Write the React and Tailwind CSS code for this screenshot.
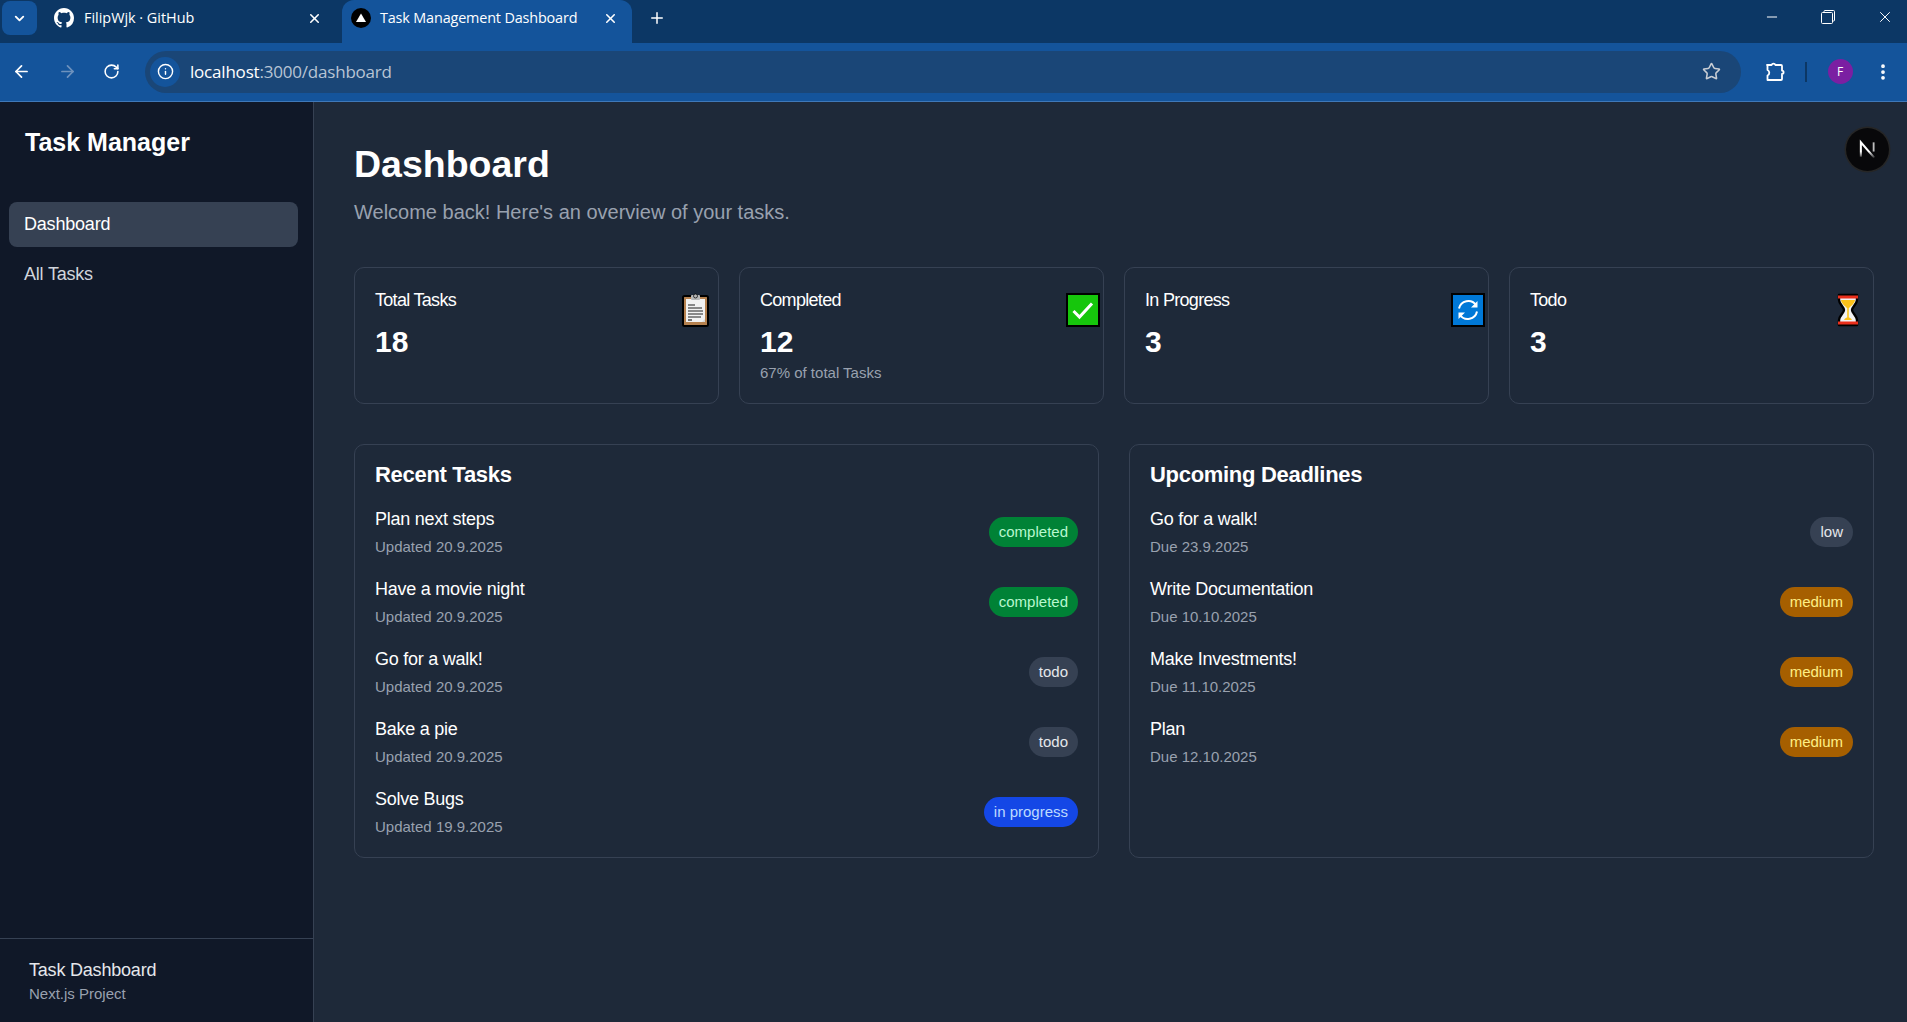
import { ArrowLeft, ArrowRight, RotateCw, Info, Star, EllipsisVertical, X, Plus, ChevronDown, Minus } from "lucide-react";

const stats = [
  { title: "Total Tasks", value: "18", icon: "clipboard" },
  { title: "Completed", value: "12", note: "67% of total Tasks", icon: "check" },
  { title: "In Progress", value: "3", icon: "refresh" },
  { title: "Todo", value: "3", icon: "hourglass" },
];

const recent = [
  { name: "Plan next steps", sub: "Updated 20.9.2025", badge: "completed" },
  { name: "Have a movie night", sub: "Updated 20.9.2025", badge: "completed" },
  { name: "Go for a walk!", sub: "Updated 20.9.2025", badge: "todo" },
  { name: "Bake a pie", sub: "Updated 20.9.2025", badge: "todo" },
  { name: "Solve Bugs", sub: "Updated 19.9.2025", badge: "in progress" },
];

const deadlines = [
  { name: "Go for a walk!", sub: "Due 23.9.2025", badge: "low" },
  { name: "Write Documentation", sub: "Due 10.10.2025", badge: "medium" },
  { name: "Make Investments!", sub: "Due 11.10.2025", badge: "medium" },
  { name: "Plan", sub: "Due 12.10.2025", badge: "medium" },
];

const badgeStyles = {
  completed: "bg-green-700 text-green-200",
  todo: "bg-gray-700 text-gray-200",
  low: "bg-gray-700 text-gray-200",
  "in progress": "bg-blue-700 text-blue-200",
  medium: "bg-yellow-700 text-yellow-200",
};

function GithubMark() {
  return (
    <svg viewBox="0 0 16 16" className="w-5 h-5 shrink-0" fill="white">
      <path d="M8 0C3.58 0 0 3.58 0 8c0 3.54 2.29 6.53 5.47 7.59.4.07.55-.17.55-.38 0-.19-.01-.82-.01-1.49-2.01.37-2.53-.49-2.69-.94-.09-.23-.48-.94-.82-1.13-.28-.15-.68-.52-.01-.53.63-.01 1.08.58 1.23.82.72 1.21 1.87.87 2.33.66.07-.52.28-.87.51-1.07-1.78-.2-3.64-.89-3.64-3.95 0-.87.31-1.59.82-2.15-.08-.2-.36-1.02.08-2.12 0 0 .67-.21 2.2.82.64-.18 1.32-.27 2-.27s1.36.09 2 .27c1.53-1.04 2.2-.82 2.2-.82.44 1.1.16 1.92.08 2.12.51.56.82 1.27.82 2.15 0 3.07-1.87 3.75-3.65 3.95.29.25.54.73.54 1.48 0 1.07-.01 1.93-.01 2.2 0 .21.15.46.55.38A8.01 8.01 0 0 0 16 8c0-4.42-3.58-8-8-8z" />
    </svg>
  );
}

function NextFavicon() {
  return (
    <svg viewBox="0 0 20 20" className="w-5 h-5 shrink-0">
      <circle cx="10" cy="10" r="10" fill="black" />
      <path d="M10 5.500 15 14H5z" fill="white" />
    </svg>
  );
}

function ExtensionIcon() {
  return (
    <svg viewBox="0 0 20 22" className="w-5 h-[22px]" fill="none" stroke="white" strokeWidth="1.800" strokeLinejoin="round">
      <path d="M2 4h4.600a2 2 0 0 1 3.800 0H16a1 1 0 0 1 1 1v4.600a1.600 1.600 0 0 1 0 3.200V18a1 1 0 0 1-1 1H2.500v-4.500a3 3 0 0 0 0-5.500V4z" />
    </svg>
  );
}

function NextBadge() {
  return (
    <svg viewBox="0 0 46 46" className="w-[47px] h-[47px]">
      <defs>
        <linearGradient id="nFade" x1="0" y1="0" x2="0" y2="1">
          <stop offset="0" stopColor="#ffffff" />
          <stop offset="0.6" stopColor="#ffffff" />
          <stop offset="1" stopColor="#ffffff" stopOpacity="0.15" />
        </linearGradient>
      </defs>
      <circle cx="23" cy="23" r="22.500" fill="#262626" />
      <circle cx="23" cy="23" r="21" fill="#08080a" />
      <path d="M16.500 30V16l13 15" fill="none" stroke="url(#nFade)" strokeWidth="2" />
      <path d="M29 16v9" fill="none" stroke="#bdbdbd" strokeWidth="1.800" />
    </svg>
  );
}

function StatIcon({ type }) {
  if (type === "clipboard") {
    return (
      <svg viewBox="0 0 27 34" className="w-[27px] h-[34px]">
        <rect x="1" y="3" width="25" height="30" rx="1.500" fill="#b5814f" stroke="black" strokeWidth="2" />
        <rect x="4" y="6" width="19" height="23" fill="#f2f2f2" />
        <path d="M23 26v3h-3z" fill="#d8d8d8" />
        <rect x="9" y="2" width="9" height="5" rx="1" fill="#b8b8b8" />
        <circle cx="13.500" cy="3" r="2" fill="#b8b8b8" stroke="black" strokeWidth="0.700" />
        <path d="M6 12h7M6 15h14M6 18h15M6 21h15M6 24h13" stroke="#666" strokeWidth="1.400" />
        <path d="M6 27h4" stroke="#222" strokeWidth="1.200" />
      </svg>
    );
  }
  if (type === "check") {
    return (
      <svg viewBox="0 0 34 34" className="w-[34px] h-[34px]">
        <rect x="1" y="1" width="32" height="32" fill="#16c60c" stroke="black" strokeWidth="2" />
        <path d="M7.500 18l6 6L26 10.500" fill="none" stroke="white" strokeWidth="3" />
      </svg>
    );
  }
  if (type === "refresh") {
    return (
      <svg viewBox="0 0 34 34" className="w-[34px] h-[34px]">
        <rect x="1" y="1" width="32" height="32" fill="#0078d7" stroke="black" strokeWidth="2" />
        <path d="M8 15.500A9.500 9.500 0 0 1 25 12" fill="none" stroke="white" strokeWidth="2" />
        <path d="M26.500 8v6.500h-6.500z" fill="white" />
        <path d="M26 18.500A9.500 9.500 0 0 1 9 22" fill="none" stroke="white" strokeWidth="2" />
        <path d="M7.500 26v-6.500h6.500z" fill="white" />
      </svg>
    );
  }
  return (
    <svg viewBox="0 0 24 34" className="w-6 h-[34px]">
      <path d="M3 2h18v5c0 4-5 7-5 10s5 6 5 10v5H3v-5c0-4 5-7 5-10S3 11 3 7z" fill="#f2f2f2" stroke="black" strokeWidth="2.400" strokeLinejoin="round" />
      <path d="M5 7h14c0 3-4 6-6 8h-2C9 13 5 10 5 7z" fill="#fcc21b" />
      <path d="M11.200 14h1.600v13h-1.600z" fill="#fcc21b" />
      <path d="M8 27c1-2 2.500-2.500 4-2.500s3 .5 4 2.500z" fill="#fcc21b" />
      <rect x="2" y="2.500" width="20" height="3" fill="#ea2f1c" />
      <rect x="2" y="28.500" width="20" height="3" fill="#ea2f1c" />
    </svg>
  );
}

function BrowserChrome() {
  return (
    <div className="font-['Open_Sans',sans-serif] shrink-0">
      <div className="h-[43px] bg-[#0c3765] flex items-start text-white text-[14.400px]">
        <div className="mt-[1px] ml-[2px] w-[35px] h-[34px] rounded-lg bg-[#14549b] flex items-center justify-center">
          <ChevronDown size={15} strokeWidth={3} />
        </div>
        <div className="w-[305px] h-[36px] flex items-center pl-[17px] pr-[20px] gap-[4px]">
          <GithubMark />
          <span className="ml-[6px] flex-1">FilipWjk · GitHub</span>
          <X size={15} strokeWidth={2.500} />
        </div>
        <div className="w-[290px] h-[43px] bg-[#14549b] rounded-t-xl flex items-center pl-[9px] pr-[14px] pb-[7px]">
          <NextFavicon />
          <span className="ml-[9px] flex-1 tracking-[-0.15px]">Task Management Dashboard</span>
          <X size={15} strokeWidth={2.500} />
        </div>
        <div className="ml-[16px] h-[36px] flex items-center">
          <Plus size={18} strokeWidth={2} />
        </div>
        <div className="ml-auto h-[34px] flex items-center pr-[13px] gap-[41px]">
          <Minus size={16} strokeWidth={1.500} />
          <svg viewBox="0 0 14 14" className="w-[14px] h-[14px]" fill="none" stroke="white" strokeWidth="1">
            <rect x="0.500" y="2.500" width="11" height="11" rx="1" />
            <path d="M3 2.500V1.500a1 1 0 0 1 1-1h8.500a1 1 0 0 1 1 1V10a1 1 0 0 1-1 1h-1" />
          </svg>
          <X size={18} strokeWidth={1.300} />
        </div>
      </div>
      <div className="h-[59px] bg-[#14549b] border-b border-[#3f78b8] flex items-center text-white pb-[1px]">
        <div className="w-[145px] flex items-center justify-between pl-[12px] pr-[25px]">
          <ArrowLeft size={19} strokeWidth={2.200} />
          <ArrowRight size={19} strokeWidth={2.200} className="text-[#6e92bd]" />
          <RotateCw size={17} strokeWidth={2.200} />
        </div>
        <div className="w-[1596px] h-[42px] rounded-full bg-[#1a4677] flex items-center pl-[5px] pr-[20px]">
          <div className="w-[30px] h-[30px] rounded-full bg-[#14549b] flex items-center justify-center">
            <Info size={17} strokeWidth={2} />
          </div>
          <span className="ml-[10px] flex-1 text-[17px] tracking-[-0.2px] pt-[1px]">
            localhost<span className="text-[#b8c4d4]">:3000/dashboard</span>
          </span>
          <Star size={19} strokeWidth={2} className="text-[#c8cdd4]" />
        </div>
        <div className="flex-1 flex items-center pl-[24px] pr-[14px] justify-between">
          <ExtensionIcon />
          <div className="w-[2px] h-5 bg-[#0c3765]" />
          <div className="w-[25px] h-[25px] rounded-full bg-[#7b1fa2] flex items-center justify-center text-[12px]">F</div>
          <EllipsisVertical size={20} strokeWidth={2.500} />
        </div>
      </div>
    </div>
  );
}

function TaskRow({ item }) {
  return (
    <div className="flex items-center justify-between h-[70px]">
      <div>
        <div className="text-[18px] leading-[27px] text-white tracking-[-0.25px]">{item.name}</div>
        <div className="text-[15px] leading-[24px] mt-[2px] text-gray-400">{item.sub}</div>
      </div>
      <span className={`px-[10px] h-[30px] flex items-center rounded-full text-[15px] ${badgeStyles[item.badge]}`}>
        {item.badge}
      </span>
    </div>
  );
}

function Panel({ title, items }) {
  return (
    <div className="flex-1 h-[414px] bg-gray-800 border border-gray-700 rounded-[10px] px-5 pt-[13px]">
      <h2 className="text-[22px] leading-[34px] font-bold text-white tracking-[-0.3px] mb-[5px]">{title}</h2>
      {items.map((item) => (
        <TaskRow key={item.name} item={item} />
      ))}
    </div>
  );
}

export default function App() {
  return (
    <div className="w-[1907px] h-[1022px] flex flex-col overflow-hidden font-['Liberation_Sans',sans-serif]">
      <BrowserChrome />
      <div className="flex-1 flex min-h-0">
        <aside className="w-[314px] bg-gray-900 border-r border-gray-700 flex flex-col">
          <div className="pl-[25px] pt-[22px] h-[100px]">
            <h1 className="text-[25px] leading-[36px] font-bold text-white">Task Manager</h1>
          </div>
          <nav className="pl-[9px] pr-[15px] flex flex-col gap-[5px] flex-1">
            <a className="h-[45px] flex items-center pl-[15px] rounded-lg bg-gray-700 text-white text-[18px] tracking-[-0.2px]">Dashboard</a>
            <a className="h-[45px] flex items-center pl-[15px] rounded-lg text-gray-300 text-[18px] tracking-[-0.2px]">All Tasks</a>
          </nav>
          <div className="h-[84px] border-t border-gray-700 pl-[29px] pt-[18px]">
            <div className="text-[18px] leading-[27px] text-gray-200 tracking-[-0.2px]">Task Dashboard</div>
            <div className="text-[15px] leading-[20px] text-gray-400">Next.js Project</div>
          </div>
        </aside>
        <main className="flex-1 relative bg-gray-800 pl-10 pr-[33px] pt-[37px]">
          <h1 className="text-[37.500px] leading-[50px] font-bold text-white">Dashboard</h1>
          <p className="text-[20px] leading-[30px] mt-[8px] text-gray-400">Welcome back! Here's an overview of your tasks.</p>
          <div className="grid grid-cols-4 gap-5 mt-[40px]">
            {stats.map((s) => (
              <div key={s.title} className="relative h-[137px] border border-gray-700 rounded-[10px] px-5 pt-[19px]">
                <div className="text-[18px] leading-[27px] text-white tracking-[-0.7px]">{s.title}</div>
                <div className="text-[30px] leading-[40px] font-bold text-white mt-[8px]">{s.value}</div>
                {s.note && <div className="text-[15px] leading-[20px] text-gray-400 mt-[1px]">{s.note}</div>}
                <div
                  className={`absolute top-[25px] ${
                    s.icon === "clipboard" ? "right-[9px]" : s.icon === "hourglass" ? "right-[13px]" : "right-[3px]"
                  }`}
                >
                  <StatIcon type={s.icon} />
                </div>
              </div>
            ))}
          </div>
          <div className="flex gap-[30px] mt-[40px]">
            <Panel title="Recent Tasks" items={recent} />
            <Panel title="Upcoming Deadlines" items={deadlines} />
          </div>
          <div className="absolute top-[24px] right-[16px]">
            <NextBadge />
          </div>
        </main>
      </div>
    </div>
  );
}
